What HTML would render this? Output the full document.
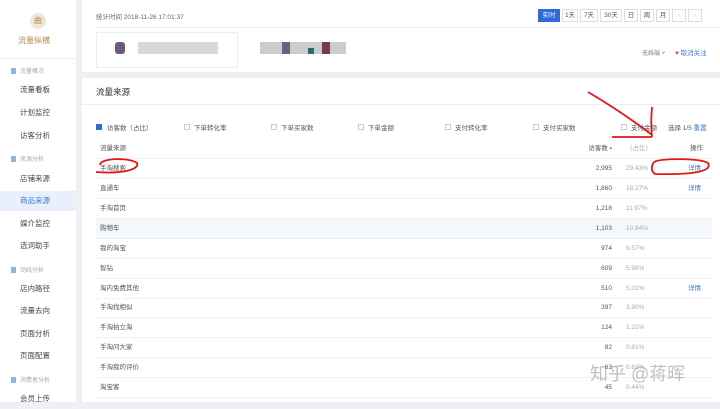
<!DOCTYPE html><html><head><meta charset="utf-8"><style>
*{margin:0;padding:0;box-sizing:border-box}
body{width:720px;height:402px;overflow:hidden;background:#eef0f4;font-family:"Liberation Sans","Noto Sans CJK SC",sans-serif;font-size:7px;color:#333;position:relative}
.a{position:absolute;white-space:nowrap}
#side{position:absolute;left:0;top:0;width:76px;height:402px;background:#fff}
.sec{position:absolute;left:11px;color:#aaa;font-size:6px}
.sec:before{content:"";display:inline-block;width:5px;height:6px;background:#8fb4e0;margin-right:4px;vertical-align:-1px}
.it{position:absolute;left:0;width:76px;padding-left:20px;font-size:7.5px;color:#444;height:20px;line-height:20px}
.card{position:absolute;background:#fff}
.row{position:absolute;left:96px;width:616px;height:20px;border-bottom:1px solid #eef0f3;line-height:20px;font-size:6.5px;color:#555}
.row span{position:absolute}
.n{right:100px;text-align:right}
.p{left:530px;color:#aaa}
.d{left:592px;color:#3a7bd5}
.cb{position:absolute;width:6px;height:6px;border:1px solid #ccc;top:124px}
.lb{position:absolute;top:122px;font-size:6.5px;color:#555}
.btn{position:absolute;top:9px;height:13px;border:1px solid #ddd;font-size:6.5px;line-height:11px;text-align:center;color:#555;background:#fff}
</style></head><body>
<div id="side">
<div class="a" style="left:30px;top:13px;width:16px;height:16px;border-radius:50%;background:#f1e6d6;color:#b98a4f;font-size:8px;text-align:center;line-height:16px">曲</div>
<div class="a" style="left:18px;top:35px;font-size:8px;color:#b98a4f">流量纵横</div>
<div class="a" style="left:0;top:58px;width:76px;border-top:1px solid #eee"></div>
<div class="sec" style="top:66px">流量概况</div>
<div class="it" style="top:80px">流量看板</div>
<div class="it" style="top:103px">计划监控</div>
<div class="it" style="top:126px">访客分析</div>
<div class="sec" style="top:154px">来源分析</div>
<div class="it" style="top:169px">店铺来源</div>
<div class="it" style="top:191px;background:#e9f0fb;color:#3a7bd5">商品来源</div>
<div class="it" style="top:214px">媒介监控</div>
<div class="it" style="top:236px">选词助手</div>
<div class="sec" style="top:265px">动线分析</div>
<div class="it" style="top:279px">店内路径</div>
<div class="it" style="top:301px">流量去向</div>
<div class="it" style="top:324px">页面分析</div>
<div class="it" style="top:346px">页面配置</div>
<div class="sec" style="top:375px">消费者分析</div>
<div class="it" style="top:389px">会员上传</div>
</div>
<div class="card" style="left:82px;top:0;width:638px;height:72px">
<div class="a" style="left:14px;top:11px;font-size:6.5px;color:#666">统计时间 2018-11-26 17:01:37</div>
<div class="a" style="left:14px;top:27px;width:624px;border-top:1px solid #f0f0f0"></div>
<div class="a" style="left:14px;top:32px;width:142px;height:36px;border:1px solid #eee"></div>
<div class="a" style="left:33px;top:42px;width:10px;height:12px;background:#6b5a7a;border-radius:3px"></div>
<div class="a" style="left:56px;top:42px;width:80px;height:12px;background:#d8d8d8"></div>
<div class="a" style="left:178px;top:42px;width:86px;height:12px;background:#ccc"></div>
<div class="a" style="left:200px;top:42px;width:8px;height:12px;background:#6e5b8a"></div>
<div class="a" style="left:226px;top:48px;width:6px;height:6px;background:#2a6b6b"></div>
<div class="a" style="left:240px;top:42px;width:8px;height:12px;background:#7a3a48"></div>
<div class="btn" style="left:456px;width:22px;background:#2f6bd8;color:#fff;border-color:#2f6bd8">实时</div>
<div class="btn" style="left:480px;width:16px">1天</div>
<div class="btn" style="left:498px;width:18px">7天</div>
<div class="btn" style="left:518px;width:22px">30天</div>
<div class="btn" style="left:542px;width:14px">日</div>
<div class="btn" style="left:558px;width:14px">周</div>
<div class="btn" style="left:574px;width:14px">月</div>
<div class="btn" style="left:590px;width:14px;color:#ccc">‹</div>
<div class="btn" style="left:606px;width:14px;color:#ccc">›</div>
<div class="a" style="left:560px;top:48px;font-size:6px;color:#777">无线端 ˅</div>
<div class="a" style="left:593px;top:47px;font-size:6.5px;color:#3a7bd5"><span style="color:#e0405a">♥</span> 取消关注</div>
</div>
<div class="card" style="left:82px;top:78px;width:638px;height:324px">
<div class="a" style="left:14px;top:8px;font-size:8.5px;color:#333">流量来源</div>
<div class="a" style="left:0;top:26px;width:638px;border-top:1px solid #eee"></div>
</div>
<div class="cb" style="left:96px;background:#2f6bd8;border-color:#2f6bd8"></div><div class="lb" style="left:107px">访客数（占比）</div>
<div class="cb" style="left:184px"></div><div class="lb" style="left:194px">下单转化率</div>
<div class="cb" style="left:271px"></div><div class="lb" style="left:281px">下单买家数</div>
<div class="cb" style="left:358px"></div><div class="lb" style="left:368px">下单金额</div>
<div class="cb" style="left:445px"></div><div class="lb" style="left:455px">支付转化率</div>
<div class="cb" style="left:533px"></div><div class="lb" style="left:543px">支付买家数</div>
<div class="cb" style="left:621px"></div><div class="lb" style="left:631px">支付金额</div>
<div class="lb" style="left:668px">选择 1/5 <span style="color:#3a7bd5">重置</span></div>
<div class="row" style="top:139px"><span style="left:4px">流量来源</span><span class="n">访客数 ⬩</span><span class="p">（占比）</span><span style="left:594px">操作</span></div>
<div class="row" style="top:159px"><span style="left:4px">手淘搜索</span><span class="n">2,995</span><span class="p">29.43%</span><span class="d">详情</span></div>
<div class="row" style="top:179px"><span style="left:4px">直通车</span><span class="n">1,860</span><span class="p">18.27%</span><span class="d">详情</span></div>
<div class="row" style="top:199px"><span style="left:4px">手淘首页</span><span class="n">1,218</span><span class="p">11.97%</span></div>
<div class="row" style="top:219px;background:#f4f7fc"><span style="left:4px">购物车</span><span class="n">1,103</span><span class="p">10.84%</span></div>
<div class="row" style="top:239px"><span style="left:4px">我的淘宝</span><span class="n">974</span><span class="p">9.57%</span></div>
<div class="row" style="top:259px"><span style="left:4px">智钻</span><span class="n">609</span><span class="p">5.98%</span></div>
<div class="row" style="top:279px"><span style="left:4px">淘内免费其他</span><span class="n">510</span><span class="p">5.01%</span><span class="d">详情</span></div>
<div class="row" style="top:298px"><span style="left:4px">手淘找相似</span><span class="n">397</span><span class="p">3.90%</span></div>
<div class="row" style="top:318px"><span style="left:4px">手淘拍立淘</span><span class="n">124</span><span class="p">1.22%</span></div>
<div class="row" style="top:338px"><span style="left:4px">手淘问大家</span><span class="n">82</span><span class="p">0.81%</span></div>
<div class="row" style="top:358px"><span style="left:4px">手淘我的评价</span><span class="n">63</span><span class="p">0.62%</span></div>
<div class="row" style="top:378px"><span style="left:4px">淘宝客</span><span class="n">45</span><span class="p">0.44%</span></div>
<div class="a" style="left:590px;top:360px;font-size:18px;color:rgba(140,140,140,.55)">知乎 @蒋晖</div>
<svg class="a" style="left:0;top:0" width="720" height="402"><g fill="none" stroke="#e01818" stroke-width="1.8">
<path d="M100 165 C100 158 128 157 137 163 C140 170 120 174 96 172"/>
<path d="M588 92 C610 105 630 118 652 135"/>
<path d="M652 107 C651 118 651 128 652 137 M612 137 L652 137"/>
<path d="M654 162 C660 158 700 158 708 163 C712 170 700 175 655 174 C650 170 652 165 654 162"/>
</g></svg>
</body></html>
